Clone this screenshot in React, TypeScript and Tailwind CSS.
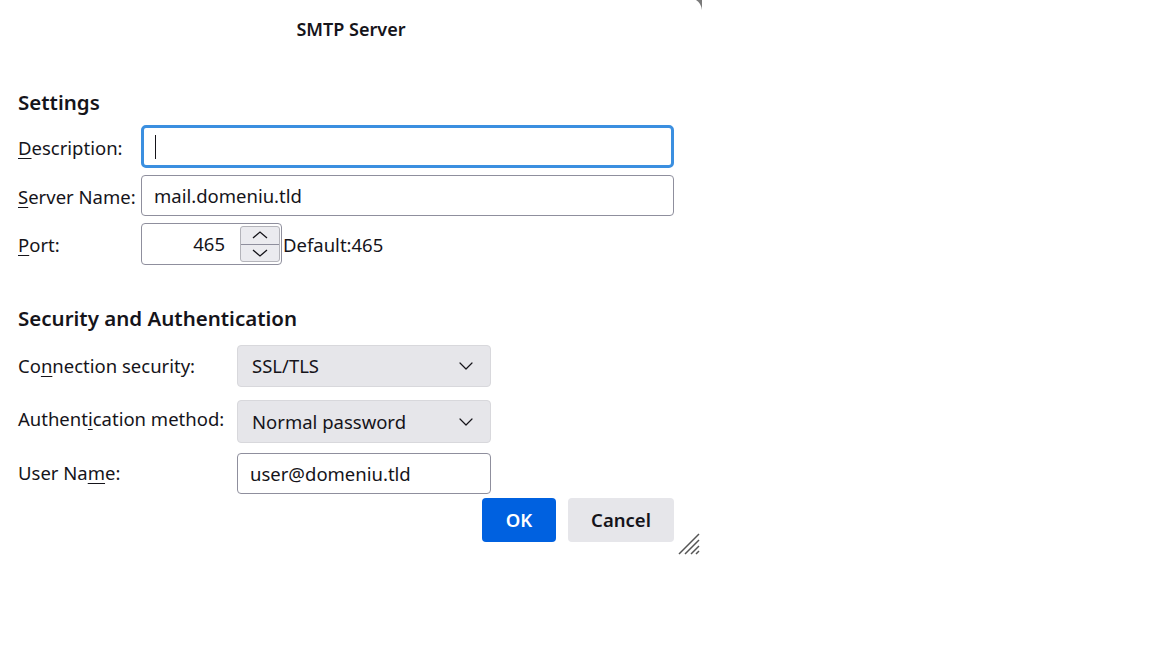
import { ChevronDown } from "lucide-react"

const font = { fontFamily: '"Segoe UI", "Noto Sans", "Open Sans", sans-serif' }

function Label({ text, k, className }: { text: string; k: number; className?: string }) {
  return (
    <span className={className}>
      {text.slice(0, k)}
      <span className="underline underline-offset-[3px]">{text[k]}</span>
      {text.slice(k + 1)}
    </span>
  )
}

function SelectBox({ value, className }: { value: string; className?: string }) {
  return (
    <div
      className={
        "flex h-[42px] w-[254px] items-center justify-between rounded-[4px] border border-[#d8d8dc] bg-[#e6e6ea] pl-[14px] pr-[12px] " +
        (className ?? "")
      }
    >
      <span>{value}</span>
      <ChevronDown size={24} strokeWidth={1.2} className="text-[#15141a]" />
    </div>
  )
}

export default function App() {
  return (
    <div className="min-h-screen w-full bg-white text-[18.5px] text-[#15141a]" style={font}>
      <div className="relative flex h-[556px] w-[702px] flex-col">
        {/* window corner */}
        <svg className="absolute right-0 top-0" width="6" height="10" viewBox="0 0 6 10">
          <path d="M0 0 H6 V10 Q5 3 0 0 Z" fill="#7a7a7a" />
        </svg>

        <div className="flex h-[58px] items-center justify-center pt-[1px] text-[18px] font-semibold">
          SMTP Server
        </div>

        <div className="flex flex-col px-[18px]">
          <h2 className="mt-[30px] text-[20.5px] font-semibold leading-[28px]">Settings</h2>

          <div className="mt-[9px] flex items-center">
            <Label text="Description:" k={0} className="mt-[3px] w-[123px]" />
            <div className="flex h-[43px] w-[533px] items-center rounded-[5px] border-[3px] border-[#3b8fe0] pl-[11px]">
              <span className="h-[24px] w-px bg-[#15141a]" />
            </div>
          </div>

          <div className="mt-[7px] flex items-center">
            <Label text="Server Name:" k={0} className="mt-[2px] w-[123px]" />
            <div className="flex h-[41px] w-[533px] items-center rounded-[4px] border border-[#8f8f9d] pl-[12px]">
              mail.domeniu.tld
            </div>
          </div>

          <div className="mt-[7px] flex items-center">
            <Label text="Port:" k={0} className="mt-[2px] w-[123px]" />
            <div className="flex h-[42px] w-[141px] items-center rounded-[4px] border border-[#8f8f9d] pl-[2px] pr-[1px]">
              <span className="flex-1 pr-[15px] text-right">465</span>
              <div className="flex h-[36px] w-[40px] flex-col overflow-hidden rounded-[3px] border border-[#b4b4ba] bg-[#ebebef]">
                <div className="flex flex-1 items-center justify-center border-b border-[#8f8f9d]">
                  <svg width="18" height="10" viewBox="0 0 18 10">
                    <path d="M2 8 L9 2 L16 8" fill="none" stroke="#15141a" strokeWidth="1.3" />
                  </svg>
                </div>
                <div className="flex flex-1 items-center justify-center">
                  <svg width="18" height="10" viewBox="0 0 18 10">
                    <path d="M2 2 L9 8 L16 2" fill="none" stroke="#15141a" strokeWidth="1.3" />
                  </svg>
                </div>
              </div>
            </div>
            <span className="ml-[1px] mt-[2px]">Default:465</span>
          </div>

          <h2 className="mt-[39px] text-[20.5px] font-semibold leading-[28px]">Security and Authentication</h2>

          <div className="mt-[13px] flex items-center">
            <Label text="Connection security:" k={2} className="w-[219px]" />
            <SelectBox value="SSL/TLS" />
          </div>

          <div className="mt-[13px] flex items-center">
            <Label text="Authentication method:" k={7} className="-mt-[6px] w-[219px]" />
            <SelectBox value="Normal password" className="h-[43px]" />
          </div>

          <div className="mt-[10px] flex items-center">
            <Label text="User Name:" k={7} className="-mt-[2px] w-[219px]" />
            <div className="flex h-[41px] w-[254px] items-center rounded-[4px] border border-[#8f8f9d] pl-[12px]">
              user@domeniu.tld
            </div>
          </div>

          <div className="mt-[4px] flex justify-end gap-[12px] pr-[10px]">
            <button className="h-[44px] w-[74px] rounded-[4px] bg-[#0061e0] font-semibold text-white">OK</button>
            <button className="h-[44px] w-[106px] rounded-[4px] bg-[#e6e6ea] font-semibold text-[#15141a]">
              Cancel
            </button>
          </div>
        </div>

        {/* resize grip */}
        <svg className="absolute bottom-0 right-[1px]" width="24" height="24" viewBox="0 0 24 24">
          <path d="M2 22 L22 2 M8 22 L22 8 M14 22 L22 14 M19 22 L22 19" stroke="#555" strokeWidth="1.5" />
        </svg>
      </div>
    </div>
  )
}
